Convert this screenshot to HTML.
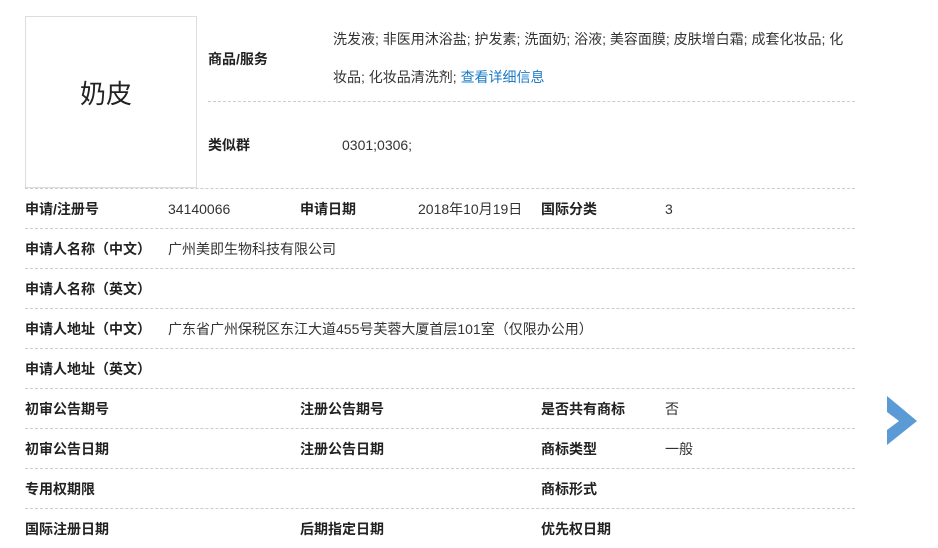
<!DOCTYPE html>
<html><head><meta charset="utf-8"><style>
body{margin:0;width:938px;height:548px;background:#fff;font-family:"Liberation Sans","Noto Sans CJK SC",sans-serif;font-size:14px;color:#333;position:relative;overflow:hidden}
.a{position:absolute;white-space:nowrap;line-height:16px}
.b{font-weight:bold;color:#222}
.h{position:absolute;height:0;border-top:1px dashed #ccc}
</style></head><body>
<div style="position:absolute;left:25px;top:16px;width:170px;height:170px;border:1px solid #ddd"></div>
<div class="a" style="left:80px;top:78px;font-size:26px;line-height:32px;color:#222">奶皮</div>
<div class="a b" style="left:208px;top:51px">商品/服务</div>
<div class="a" style="left:333px;top:31px">洗发液; 非医用沐浴盐; 护发素; 洗面奶; 浴液; 美容面膜; 皮肤增白霜; 成套化妆品; 化</div>
<div class="a" style="left:333px;top:69px">妆品; 化妆品清洗剂; <span style="color:#1a7bc6">查看详细信息</span></div>
<div class="h" style="left:208px;top:101px;width:647px"></div>
<div class="a b" style="left:208px;top:137px">类似群</div>
<div class="a" style="left:342px;top:137px">0301;0306;</div>
<div class="h" style="left:25px;top:188px;width:830px"></div>

<div class="a b" style="left:25px;top:201px">申请/注册号</div><div class="a" style="left:168px;top:201px">34140066</div>
<div class="a b" style="left:300px;top:201px">申请日期</div><div class="a" style="left:418px;top:201px">2018年10月19日</div>
<div class="a b" style="left:541px;top:201px">国际分类</div><div class="a" style="left:665px;top:201px">3</div>
<div class="h" style="left:25px;top:228px;width:830px"></div>
<div class="a b" style="left:25px;top:241px">申请人名称（中文）</div><div class="a" style="left:168px;top:241px">广州美即生物科技有限公司</div>
<div class="h" style="left:25px;top:268px;width:830px"></div>
<div class="a b" style="left:25px;top:281px">申请人名称（英文）</div>
<div class="h" style="left:25px;top:308px;width:830px"></div>
<div class="a b" style="left:25px;top:321px">申请人地址（中文）</div><div class="a" style="left:168px;top:321px">广东省广州保税区东江大道455号芙蓉大厦首层101室（仅限办公用）</div>
<div class="h" style="left:25px;top:348px;width:830px"></div>
<div class="a b" style="left:25px;top:361px">申请人地址（英文）</div>
<div class="h" style="left:25px;top:388px;width:830px"></div>
<div class="a b" style="left:25px;top:401px">初审公告期号</div><div class="a b" style="left:300px;top:401px">注册公告期号</div><div class="a b" style="left:541px;top:401px">是否共有商标</div><div class="a" style="left:665px;top:401px">否</div>
<div class="h" style="left:25px;top:428px;width:830px"></div>
<div class="a b" style="left:25px;top:441px">初审公告日期</div><div class="a b" style="left:300px;top:441px">注册公告日期</div><div class="a b" style="left:541px;top:441px">商标类型</div><div class="a" style="left:665px;top:441px">一般</div>
<div class="h" style="left:25px;top:468px;width:830px"></div>
<div class="a b" style="left:25px;top:481px">专用权期限</div><div class="a b" style="left:541px;top:481px">商标形式</div>
<div class="h" style="left:25px;top:508px;width:830px"></div>
<div class="a b" style="left:25px;top:521px">国际注册日期</div><div class="a b" style="left:300px;top:521px">后期指定日期</div><div class="a b" style="left:541px;top:521px">优先权日期</div>
<svg style="position:absolute;left:886px;top:396px" width="32" height="50"><polygon points="1,0 31,25 1,49 1,34 13,25 1,16" fill="#5b9bd5"/></svg>
</body></html>
